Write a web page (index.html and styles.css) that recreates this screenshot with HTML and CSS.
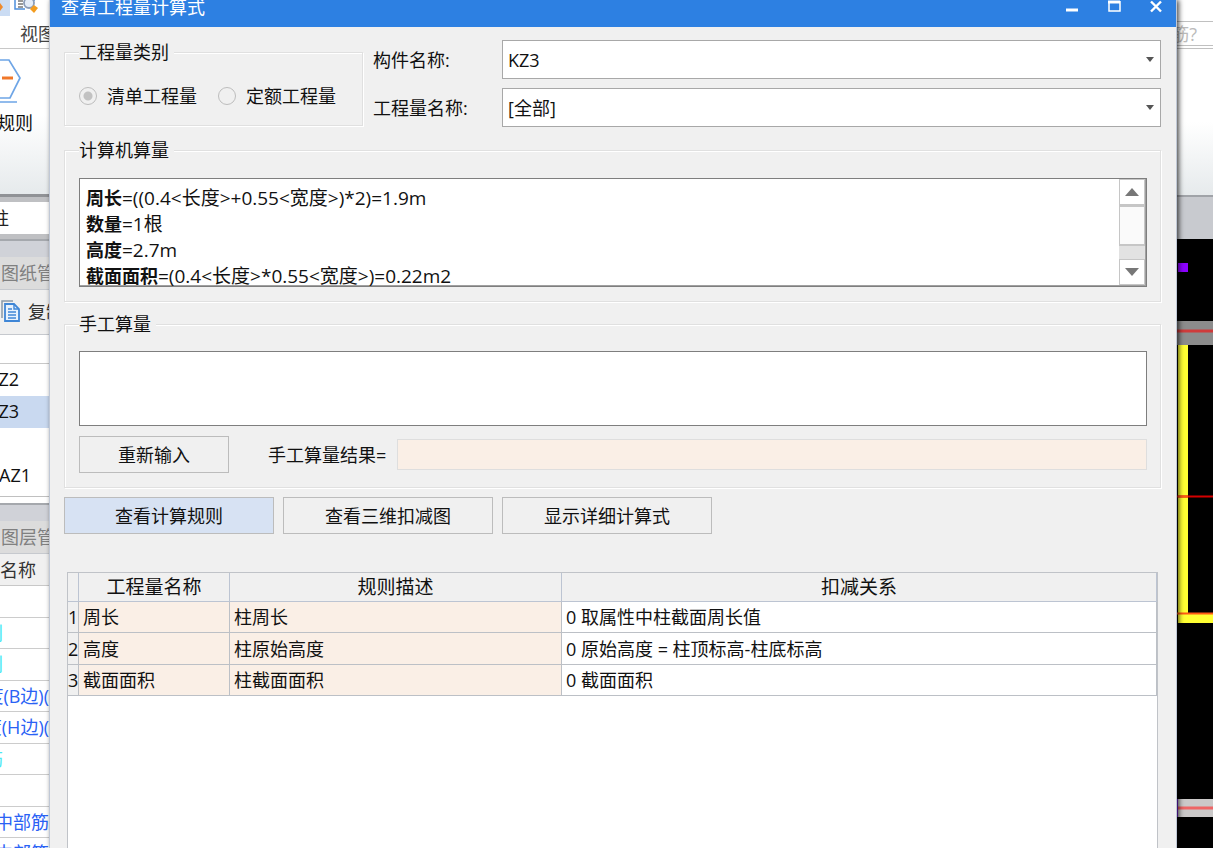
FILE: index.html
```html
<!DOCTYPE html>
<html lang="zh-CN">
<head>
<meta charset="utf-8">
<title>查看工程量计算式</title>
<link rel="stylesheet" href="styles.css">
</head>
<body>
<div class="desktop">
  <aside class="side">
    <div class="side-quick">
      <span class="quick-active"><svg width="4" height="12" viewBox="0 0 4 12"><path d="M0 3l3 4-3 4z" fill="#ef8a2c"/></svg></span>
      <svg width="26" height="15" viewBox="0 0 26 15"><path d="M1 0v9h10M20 0v1" fill="none" stroke="#4d8fdb" stroke-width="1.5"/><path d="M4 1h5M4 4h5M4 7h5" stroke="#777" stroke-width="1.3"/><circle cx="15" cy="3" r="5" fill="#e4ecf8" stroke="#8c9db8" stroke-width="1.8"/><path d="M20 5l4 3-4 5-4-4z" fill="#f39c1f"/></svg>
    </div>
    <div class="side-tab">视图</div>
    <div class="side-ribbon">
      <svg width="24" height="48" viewBox="0 0 24 48"><path d="M0 4h9l11 18-10 20H0M0 46h17" fill="none" stroke="#6ea5e6" stroke-width="1.7"/><path d="M2 22h11" stroke="#f0782a" stroke-width="3"/></svg>
      <span class="ribbon-label">规则</span>
    </div>
    <div class="side-combo"><span class="clip-start pad-40">柱</span></div>
    <div class="side-gap"></div>
    <div class="side-title">图纸管理</div>
    <div class="side-tools">
      <svg width="20" height="24" viewBox="0 0 20 24"><path d="M1 18V1h11" fill="none" stroke="#8a99a8" stroke-width="1.5"/><path d="M4 4h9l5 5v12H4z" fill="#e8f2fd" stroke="#3f86d6" stroke-width="1.8"/><path d="M13 4v5h5M7 9h4M7 12h8M7 15h8M7 18h8" fill="none" stroke="#3f86d6" stroke-width="1.4"/></svg>
      <span>复制</span>
    </div>
    <div class="side-search"></div>
    <ul class="side-tree">
      <li class="clip-start pad-30">KZ2</li>
      <li class="clip-start pad-30 selected">KZ3</li>
      <li></li>
      <li class="clip-start pad-18">AZ1</li>
    </ul>
    <div class="side-gap"></div>
    <div class="side-title">图层管理</div>
    <div class="side-head">名称</div>
    <ul class="side-props">
      <li></li>
      <li class="clip-start pad-46 cyan">别</li>
      <li class="clip-start pad-46 cyan">别</li>
      <li class="clip-start">度(B边)(</li>
      <li class="clip-start">度(H边)(</li>
      <li class="clip-start pad-46 cyan">筋</li>
      <li></li>
      <li class="clip-start">中部筋</li>
      <li class="clip-start">中部筋</li>
    </ul>
  </aside>

  <main class="dialog">
    <header class="titlebar">
      <h1>查看工程量计算式</h1>
      <div class="window-buttons">
        <button type="button" aria-label="最小化"><svg width="14" height="14" viewBox="0 0 14 14"><path d="M1 10h12" stroke="#fff" stroke-width="3"/></svg></button>
        <button type="button" aria-label="最大化"><svg width="14" height="14" viewBox="0 0 14 14"><path d="M2 1v10h11V1" fill="none" stroke="#fff" stroke-width="1.5"/><path d="M1 2h12" stroke="#fff" stroke-width="3"/></svg></button>
        <button type="button" aria-label="关闭"><svg width="14" height="14" viewBox="0 0 14 14"><path d="M2 1.500l10 10M12 1.500l-10 10" stroke="#fff" stroke-width="2.400"/></svg></button>
      </div>
    </header>

    <div class="content">
      <div class="top">
        <fieldset class="group kind">
          <legend>工程量类别</legend>
          <label><input type="radio" name="kind" checked disabled>清单工程量</label>
          <label><input type="radio" name="kind" disabled>定额工程量</label>
        </fieldset>
        <div class="filters">
          <label for="member">构件名称:</label>
          <div class="picker">
            <select id="member"><option>KZ3</option></select>
            <svg width="10" height="5" viewBox="0 0 10 5"><path d="M1 0h8L5 5z" fill="#555"/></svg>
          </div>
          <label for="quantity">工程量名称:</label>
          <div class="picker">
            <select id="quantity"><option>[全部]</option></select>
            <svg width="10" height="5" viewBox="0 0 10 5"><path d="M1 0h8L5 5z" fill="#555"/></svg>
          </div>
        </div>
      </div>

      <fieldset class="group computed">
        <legend>计算机算量</legend>
        <div class="result">
          <div class="result-text">
            <p><b>周长</b>=((0.4&lt;长度&gt;+0.55&lt;宽度&gt;)*2)=1.9m</p>
            <p><b>数量</b>=1根</p>
            <p><b>高度</b>=2.7m</p>
            <p><b>截面面积</b>=(0.4&lt;长度&gt;*0.55&lt;宽度&gt;)=0.22m2</p>
          </div>
          <div class="scroll">
            <button type="button" aria-label="向上滚动"><svg width="14" height="8" viewBox="0 0 14 8"><path d="M0 8h14L7 0z" fill="#777"/></svg></button>
            <div class="thumb"></div>
            <div class="track"></div>
            <button type="button" aria-label="向下滚动"><svg width="14" height="8" viewBox="0 0 14 8"><path d="M0 0h14L7 8z" fill="#777"/></svg></button>
          </div>
        </div>
      </fieldset>

      <fieldset class="group manual">
        <legend>手工算量</legend>
        <textarea aria-label="手工算量"></textarea>
        <div class="manual-row">
          <button type="button" class="btn retry">重新输入</button>
          <label for="manual-result">手工算量结果=</label>
          <input id="manual-result" type="text" readonly>
        </div>
      </fieldset>

      <div class="actions">
        <button type="button" class="btn primary">查看计算规则</button>
        <button type="button" class="btn">查看三维扣减图</button>
        <button type="button" class="btn">显示详细计算式</button>
      </div>

      <div class="grid">
        <table>
          <colgroup><col class="col-no"><col class="col-name"><col class="col-rule"><col></colgroup>
          <thead>
            <tr><th></th><th>工程量名称</th><th>规则描述</th><th>扣减关系</th></tr>
          </thead>
          <tbody>
            <tr><td>1</td><td>周长</td><td>柱周长</td><td>0 取属性中柱截面周长值</td></tr>
            <tr><td>2</td><td>高度</td><td>柱原始高度</td><td>0 原始高度 = 柱顶标高-柱底标高</td></tr>
            <tr><td>3</td><td>截面面积</td><td>柱截面面积</td><td>0 截面面积</td></tr>
          </tbody>
        </table>
      </div>
    </div>
  </main>

  <aside class="view">
    <div class="view-top"></div>
    <div class="view-find"><span class="clip-start">筋?</span></div>
    <div class="view-ribbon"></div>
    <div class="view-bar"></div>
    <svg class="drawing" width="36" height="609" viewBox="0 0 36 609">
      <path d="M1 24h10v9H1z" fill="#8c00ff"/>
      <path d="M0 82h36v24H0z" fill="#8c8c8c"/>
      <path d="M1 106h10v268h25v10H1z" fill="#ffff33"/>
      <path d="M0 92h36" stroke="#cf3b3b" stroke-width="3"/>
      <path d="M0 257.500h36" stroke="#d40000" stroke-width="2"/>
      <path d="M1 257.500h10M0 374.500h36" stroke="#ff5a14" stroke-width="2"/>
      <path d="M0 560h36v18H0z" fill="#cbc9c9"/>
      <path d="M0 569h36" stroke="#e66" stroke-width="3"/>
      <path d="M.5 560v18" stroke="#7a20e0"/>
    </svg>
  </aside>
</div>
</body>
</html>
```
FILE: styles.css
```css
* { box-sizing: border-box; }

body {
  margin: 0;
  font: 18px/24px "Open Sans", "Noto Sans CJK SC", sans-serif;
  color: #111;
}

button, input, select, textarea { font: inherit; color: inherit; margin: 0; border-radius: 0; }
svg { display: block; flex: none; }
ul { list-style: none; margin: 0; padding: 0; }

.desktop { display: flex; height: 100vh; overflow: hidden; }

/* Left strip of the main window */
.side {
  width: 49px;
  flex: none;
  display: flex;
  flex-direction: column;
  overflow: hidden;
  white-space: nowrap;
  background: #fff;
}
.side > * { flex: none; }
.clip-start { display: flex; justify-content: flex-end; }
.pad-18 { padding-right: 18px; }
.pad-30 { padding-right: 30px; }
.pad-40 { padding-right: 40px; }
.pad-46 { padding-right: 46px; }

.side-quick { display: flex; gap: 4px; height: 20px; }
.quick-active { width: 10px; height: 16px; background: #cbdcf3; }
.side-tab { height: 29px; padding-left: 20px; line-height: 29px; border-bottom: 1px solid #c8c8c8; color: #444; }
.side-ribbon {
  height: 148px;
  padding-top: 7px;
  background: linear-gradient(#fff 45%, #e6eaec);
  border-bottom: 3px solid #909296;
}
.ribbon-label { display: block; padding-top: 7px; line-height: 24px; margin-left: -3px; }
.side-combo { height: 42px; line-height: 32px; border-top: 5px solid #bfc0c3; border-bottom: 5px solid #bfc0c3; color: #222; }
.side-gap { height: 18px; background: #d0d2d8; border-top: 2px solid #a5a8ad; }
.side-title { height: 33px; padding-left: 1px; line-height: 33px; background: #dcdcdc; color: #808080; border-bottom: 1px solid #c6c9ce; }
.side-tools { display: flex; align-items: center; gap: 7px; height: 45px; padding-left: 1px; background: #f0f0f0; border-bottom: 1px solid #c6c9ce; color: #333; }
.side-search { height: 29px; border-bottom: 1px solid #c8c8c8; }
.side-tree { height: 139px; border-bottom: 6px solid #fff; box-shadow: inset 0 -1px #c0c0c0; }
.side-tree li { height: 32px; line-height: 31px; }
.side-tree .selected { background: #c9d9f0; }
.side-head { height: 32px; line-height: 32px; background: #f0f0f0; border-bottom: 1px solid #c8c8c8; color: #333; }
.side-props { color: #2a62f5; }
.side-props li { height: 31px; line-height: 31px; border-bottom: 1px solid #ccc; }
.side-props li:nth-child(odd) { height: 32px; }
.side-props .cyan { color: #4be8f5; }

/* Dialog */
.dialog {
  flex: 1;
  min-width: 0;
  position: relative;
  z-index: 1;
  display: flex;
  flex-direction: column;
  background: #f0f0f0;
  border-left: 1px solid #c0c8d6;
  border-right: 1px solid #c0c8d6;
  box-shadow: 2px 0 5px rgba(0, 0, 0, .7);
}
.titlebar {
  display: flex;
  justify-content: space-between;
  flex: none;
  height: 27px;
  padding: 0 13px 0 11px;
  background: #2d80e2;
  color: #fff;
}
.titlebar h1 { margin: 0; font-size: 18px; font-weight: 400; line-height: 14px; }
.window-buttons { display: flex; gap: 28px; }
.window-buttons button { height: 14px; padding: 0; border: 0; background: none; }

.content { flex: 1; display: flex; flex-direction: column; padding: 13px 15px 0 14px; }

.group {
  margin: 0;
  min-width: 0;
  padding: 15px 13px 14px 14px;
  border: 1px solid #e0e0e0;
  box-shadow: 1px 1px #fff, inset 1px 1px #fff;
}
.group legend { padding: 0 5px 0 0; background: #f0f0f0; }

.top { display: flex; gap: 10px; }
.kind { display: flex; gap: 21px; width: 299px; height: 86px; padding-top: 20px; }
.kind label { display: flex; align-items: center; gap: 10px; height: 24px; white-space: nowrap; }
.kind input {
  appearance: none;
  width: 18px;
  height: 18px;
  border: 1px solid #bdbdbd;
  border-radius: 50%;
}
.kind input:checked { background: radial-gradient(circle, #c2c2c2 4px, transparent 5px); }

.filters { flex: 1; display: grid; grid-template-columns: 119px 1fr; gap: 9px 10px; align-items: center; }
.filters > label { white-space: nowrap; }
.picker { display: grid; align-items: center; }
.picker > * { grid-area: 1 / 1; }
.picker svg { justify-self: end; margin-right: 6px; pointer-events: none; }
.picker select { appearance: none; width: 100%; height: 39px; padding: 1px 5px 0; border: 1px solid #a8a8a8; background: #fff; }

.computed { margin-top: 11px; padding-top: 16px; }
.result { display: flex; height: 109px; border: 1px solid #7e7e7e; box-shadow: inset -1px -1px #a0a0a0; background: #fff; overflow: hidden; }
.result-text { flex: 1; padding: 6px; font-size: 19px; line-height: 26px; }
.result-text p { margin: 0; }
.result-text b { font-size: 18px; }
.scroll { display: flex; flex-direction: column; width: 26px; margin: 0 1px 1px 0; background: #e2e2e2; }
.scroll button { display: grid; place-items: center; height: 26px; padding: 0; border: 1px solid #c6c6c6; background: #fff; }
.thumb { height: 41px; border: 1px solid #c6c6c6; border-width: 2px 1px; background: #fafafa; }
.track { flex: 1; }

.manual { margin-top: 10px; }
.manual textarea { display: block; width: 100%; height: 75px; border: 1px solid #7e7e7e; background: #fff; resize: none; outline: 0; }
.manual-row { display: flex; align-items: center; margin-top: 10px; }
.manual-row label { margin: 0 11px 0 39px; white-space: nowrap; }
.manual-row input { flex: 1; min-width: 0; height: 31px; border: 1px solid #dedede; background: #faefe6; }
.btn { width: 210px; height: 37px; padding: 0; border: 1px solid #bcbcbc; background: #f0f0f0; }
.retry { width: 150px; }
.primary { background: #d7e2f3; }
.actions { display: flex; gap: 9px; margin-top: 9px; }

.grid { flex: 1; margin: 38px 3px 0; border: 1px solid #c0c3c8; border-bottom: 0; background: #fff; }
table { width: 100%; table-layout: fixed; border-collapse: separate; border-spacing: 0; }
.col-no { width: 11px; }
.col-name { width: 151px; }
.col-rule { width: 332px; }
th { height: 29px; padding: 0; font-size: 19px; font-weight: 400; background: #f0f0f0; border-right: 1px solid #bcc4d2; border-bottom: 1px solid #bcc4d2; }
td { height: 31px; padding: 0 4px; white-space: nowrap; border-right: 1px solid #bcc0c6; border-bottom: 1px solid #bcc0c6; }
tbody tr:nth-child(even) td { height: 32px; }
td:first-child { padding: 0; background: #f0f0f0; }
td:nth-child(2), td:nth-child(3) { background: #faefe6; }

/* Right strip of the main window */
.view { width: 36px; flex: none; display: flex; flex-direction: column; overflow: hidden; background: #000; }
.view > * { flex: none; }
.view-top { height: 21px; background: #fff; }
.view-find { height: 28px; padding-right: 16px; line-height: 25px; background: #fff; border: solid #c0c0c0; border-width: 1px 0; box-shadow: inset 0 -2px #fff, inset 0 -3px #c0c0c0; color: #bbb; }
.view-ribbon { height: 146px; background: linear-gradient(#fff 50%, #e6eaec); }
.view-bar { height: 44px; border-top: 2px solid #a0a3a8; background: #c8cacf; }
.drawing { width: 100%; }
```
